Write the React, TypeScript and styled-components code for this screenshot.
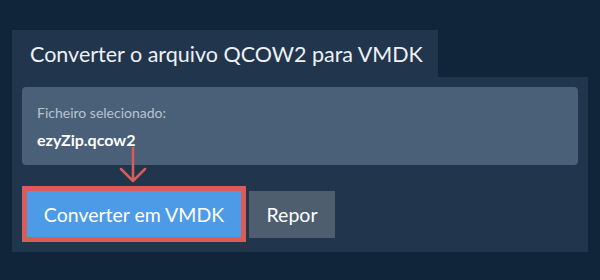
import React from 'react';
import styled, { createGlobalStyle } from 'styled-components';

const GlobalStyle = createGlobalStyle`
  html, body {
    margin: 0;
    padding: 0;
    background: #10243a;
    font-family: Lato, 'Open Sans', sans-serif;
  }
`;

const Page = styled.div`
  width: 600px;
  height: 280px;
  padding: 30px 0 0 12px;
  box-sizing: border-box;
`;

const Tab = styled.div`
  display: flex;
  align-items: center;
  height: 47px;
  width: 426px;
  padding: 0 0 0 18px;
  box-sizing: border-box;
  background: #21364d;
  color: #eef1f5;
  font-size: 21.5px;
  white-space: nowrap;
`;

const Panel = styled.div`
  width: 576px;
  box-sizing: border-box;
  padding: 10px;
  background: #21364d;
  display: flex;
  flex-direction: column;
  gap: 21px;
`;

const FileBox = styled.div`
  height: 78px;
  box-sizing: border-box;
  padding: 17px 15px 0;
  background: #4a6079;
  border-radius: 4px;
  display: flex;
  flex-direction: column;
  gap: 9px;
`;

const Label = styled.div`
  color: #b9c3ce;
  font-size: 14px;
  line-height: 17px;
`;

const FileName = styled.div`
  color: #ffffff;
  font-size: 16px;
  font-weight: 700;
  line-height: 20px;
`;

const Actions = styled.div`
  position: relative;
  display: flex;
  align-items: center;
  gap: 3px;
`;

const Button = styled.button<{ $primary?: boolean }>`
  font-family: inherit;
  font-size: 19.5px;
  color: #ffffff;
  cursor: pointer;
  box-sizing: border-box;
  padding: 0;
  background: ${(p) => (p.$primary ? '#4d9be7' : '#4e5e6f')};
  height: ${(p) => (p.$primary ? '56px' : '47px')};
  width: ${(p) => (p.$primary ? '224px' : '86px')};
  border: ${(p) => (p.$primary ? '5px solid #d95b5a' : 'none')};
`;

const Arrow = styled.svg`
  position: absolute;
  left: 97px;
  top: -39px;
`;

export default function App() {
  return (
    <>
      <GlobalStyle />
      <Page>
        <Tab>Converter o arquivo QCOW2 para VMDK</Tab>
        <Panel>
          <FileBox>
            <Label>Ficheiro selecionado:</Label>
            <FileName>ezyZip.qcow2</FileName>
          </FileBox>
          <Actions>
            <Arrow width="28" height="36" viewBox="0 0 28 36" fill="none">
              <path
                d="M14 1 V34 M2 22 L14 34 L26 22"
                stroke="#d95b5a"
                strokeWidth="2.5"
                strokeLinecap="round"
                strokeLinejoin="round"
              />
            </Arrow>
            <Button $primary>Converter em VMDK</Button>
            <Button>Repor</Button>
          </Actions>
        </Panel>
      </Page>
    </>
  );
}
